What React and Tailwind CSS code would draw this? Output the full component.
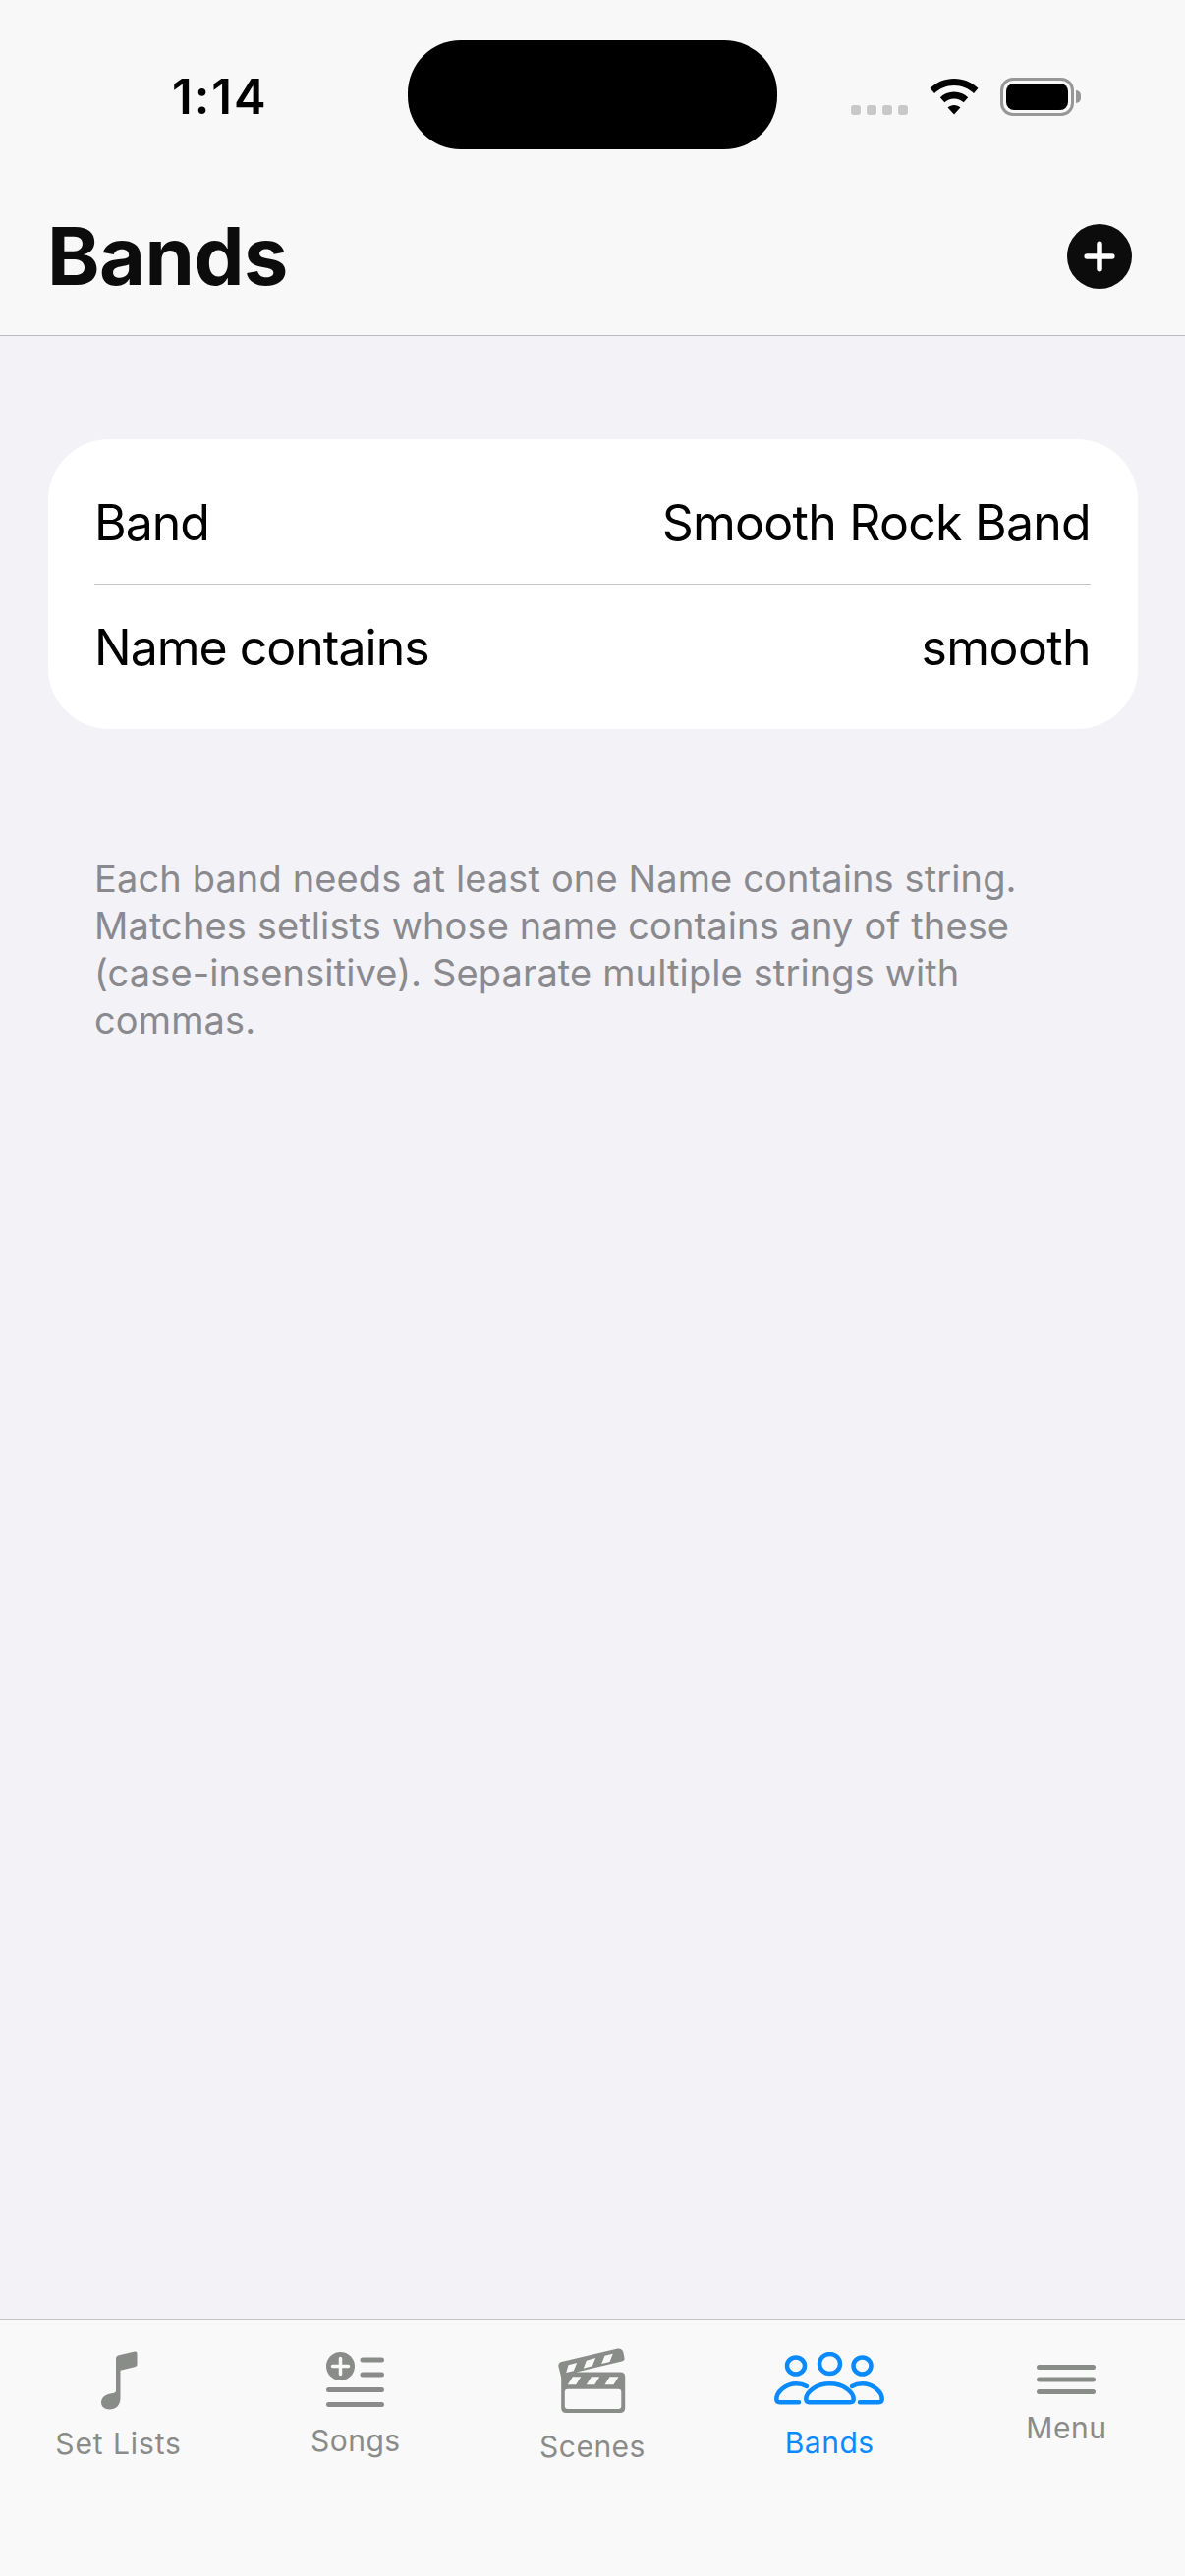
import { Plus } from 'lucide-react'

const sf = 'font-["Inter",sans-serif]'

function Wifi() {
  return (
    <svg width="50" height="37" viewBox="0 0 50 37" className="text-black">
      <path d="M25 0C34.5 0 43 3.7 49.5 9.8L45 15C39.8 10 32.8 7 25 7S10.2 10 5 15L.5 9.8C7 3.7 15.5 0 25 0Z" fill="currentColor" />
      <path d="M25 13.5C30.5 13.500 35.5 15.700 39.200 19.200L34.700 24.300C32.100 21.900 28.700 20.400 25 20.400S17.900 21.900 15.300 24.300L10.800 19.200C14.500 15.700 19.500 13.500 25 13.500Z" fill="currentColor" />
      <path d="M25 27C27.500 27 29.700 27.900 31.400 29.400L25 36.500L18.600 29.400C20.300 27.900 22.500 27 25 27Z" fill="currentColor" />
    </svg>
  )
}

function Battery() {
  return (
    <div className="flex items-center">
      <div className="w-[75px] h-[39px] rounded-[13px] border-[3px] border-[#979797] p-[3px]">
        <div className="w-full h-full rounded-[8px] bg-black" />
      </div>
      <div className="w-[5px] h-[13px] ml-[2px] rounded-r-full bg-[#979797]" />
    </div>
  )
}

function NoteIcon() {
  return (
    <svg width="37" height="60" viewBox="-1 0 37 60" className="text-[#8a8c8a] overflow-visible">
      <path d="M15 8C15 6 16 4.800 18 4.300L34 .5C35.500 .2 36.500 1 36.500 2.500V13.500C36.500 15 35.800 15.800 34 16.300L19.500 19.700V48C19.500 55 15 59.500 8.500 59.500C3.500 59.500 0 56.500 0 52.500C0 47.500 4 44.500 9 43.500L13 42.700C14.500 42.300 15 41.500 15 40Z" fill="currentColor" />
    </svg>
  )
}

function SongsIcon() {
  return (
    <svg width="59" height="56" viewBox="0 0 59 56" className="text-[#8a8c8a]">
      <circle cx="14.500" cy="14.500" r="14.500" fill="currentColor" />
      <path d="M14.500 6.500V22.500M6.500 14.500H22.500" stroke="#f9f9f9" strokeWidth="3.500" strokeLinecap="round" />
      <path d="M37 8H56.500M37 23H56.500M2.500 38.500H56.500M2.500 53.500H56.500" stroke="currentColor" strokeWidth="5" strokeLinecap="round" />
    </svg>
  )
}

function ScenesIcon() {
  return (
    <svg width="70" height="67" viewBox="1.500 0 70 67" className="text-[#8a8c8a]">
      <path d="M2 19C1.300 16.500 2.500 14.800 5 14L61 .8C64.500 0 67 1.200 67.800 4L69 10C69.300 12 68.500 13 66.500 13.500L20 24.500H65C68 24.500 69.700 26.200 69.700 29V61C69.700 64.300 67.800 66 64.700 66H9.700C6.500 66 4.700 64.300 4.700 61V30Z" fill="currentColor" />
      <path d="M12 17.300L20.700 15L17.300 23.300L9.700 25ZM30.300 12.700L39.700 10L36.300 18.300L27.300 20.700ZM49 7.700L57.300 5.700L54 14L45.700 16Z" fill="#f9f9f9" />
      <path d="M16.300 29.300H24.700L19.700 37.300H11.300ZM35.300 29.300H43.700L38.700 37.300H30.300ZM54 29.300H63L58 37.300H49Z" fill="#f9f9f9" />
      <rect x="8.300" y="41.700" width="57.500" height="20.300" rx="3" fill="#f9f9f9" />
    </svg>
  )
}

function BandsIcon() {
  return (
    <svg width="112" height="54" viewBox="0 0 112 54" fill="none" stroke="#0a8aff" strokeWidth="4.500" strokeLinecap="round" className="shrink-0">
      <ellipse cx="22" cy="14" rx="9" ry="8.500" />
      <ellipse cx="56.500" cy="12" rx="10.500" ry="10" />
      <ellipse cx="89.500" cy="14" rx="9" ry="8.500" />
      <path d="M33 35C29.500 33 26 32.300 22.500 32.300C11 32.300 2.300 41 2.300 48C2.300 50 3.500 51.200 5.500 51.200H25" />
      <path d="M79 35C82.500 33 86 32.300 89.500 32.300C101 32.300 109.700 41 109.700 48C109.700 50 108.500 51.200 106.500 51.200H87" />
      <path d="M56.500 32.300C43 32.300 32.300 40.500 32.300 48C32.300 50 33.500 51.200 35.500 51.200H77.500C79.500 51.200 80.700 50 80.700 48C80.700 40.500 70 32.300 56.500 32.300Z" />
    </svg>
  )
}

function MenuIcon() {
  return (
    <svg width="60" height="30" viewBox="0 0 60 30" className="text-[#8a8c8a]">
      <path d="M2.500 2.500H57.500M2.500 15H57.500M2.500 27.500H57.500" stroke="currentColor" strokeWidth="5" strokeLinecap="round" />
    </svg>
  )
}

const tabs = [
  { label: 'Set Lists', Icon: NoteIcon, top: 'pt-[32px]', gap: 'gap-[16px]', color: 'text-[#8a8c8a]', track: 'tracking-[0.9px]' },
  { label: 'Songs', Icon: SongsIcon, top: 'pt-[33px]', gap: 'gap-[16px]', color: 'text-[#8a8c8a]', track: 'tracking-[0.5px]' },
  { label: 'Scenes', Icon: ScenesIcon, top: 'pt-[29px]', gap: 'gap-[15px]', color: 'text-[#8a8c8a]', track: 'tracking-[0.5px]' },
  { label: 'Bands', Icon: BandsIcon, top: 'pt-[33px]', gap: 'gap-[20px]', color: 'text-[#0a8aff]', track: 'tracking-[0.5px]' },
  { label: 'Menu', Icon: MenuIcon, top: 'pt-[46px]', gap: 'gap-[16px]', color: 'text-[#8a8c8a]', track: 'tracking-[0.5px]' },
]

export default function App() {
  return (
    <div className={`relative flex flex-col h-screen bg-[#f2f2f7] ${sf}`}>

      {/* dynamic island */}
      <div className="absolute left-[415px] top-[41px] w-[376px] h-[111px] rounded-[54px] bg-black" />

      {/* ── Header ── */}
      <header className="h-[342px] flex flex-col bg-[#f8f8f8] border-b border-[#bcbcc0]">
        <div className="flex items-center justify-between h-[196px] pl-[175px] pr-[106px]">
          <span className="text-[49px] leading-none font-semibold text-black tracking-[2px]">1:14</span>
          <div className="flex items-center gap-[22px]">
            <div className="flex items-center gap-[6px] mt-[27px]">
              <span className="w-[10px] h-[10px] rounded-[3px] bg-[#c8c8c8]" />
              <span className="w-[10px] h-[10px] rounded-[3px] bg-[#c8c8c8]" />
              <span className="w-[10px] h-[10px] rounded-[3px] bg-[#c8c8c8]" />
              <span className="w-[10px] h-[10px] rounded-[3px] bg-[#c8c8c8]" />
            </div>
            <Wifi />
            <Battery />
          </div>
        </div>
      </header>

      {/* ── Title row ── */}
      <div className="absolute left-[48px] right-[54px] top-[228px] h-[66px] flex items-center justify-between">
        <h1 className="text-[81px] leading-none font-bold text-[#0c0c0c] tracking-[-0.5px]">Bands</h1>
        <button className="w-[66px] h-[66px] rounded-full bg-[#0c0c0c] flex items-center justify-center">
          <Plus className="w-[44px] h-[44px] text-white" strokeWidth={3} />
        </button>
      </div>

      {/* ── Content ── */}
      <main className="flex-1 px-[49px] pt-[105px]">
        <div className="w-[1109px] bg-white rounded-[62px] pl-[47px] pr-[48px] pt-[23px] pb-[19px]">
          <div className="h-[125px] flex items-center justify-between border-b border-[#c6c6c8] text-[50px] text-black">
            <span className="tracking-[-1px]">Band</span>
            <span className="tracking-[-0.75px]">Smooth Rock Band</span>
          </div>
          <div className="h-[128px] flex items-center justify-between text-[50px] text-black">
            <span className="tracking-[-1px]">Name contains</span>
            <span className="tracking-[-0.6px]">smooth</span>
          </div>
        </div>
        <p className="mt-[128px] px-[47px] text-[38px] leading-[48px] text-[#8a8a8e] tracking-[0.12px]">
          Each band needs at least one Name contains string. Matches setlists whose name contains any of these (case-insensitive). Separate multiple strings with commas.
        </p>
      </main>

      {/* ── Tab bar ── */}
      <nav className="h-[262px] grid grid-cols-5 bg-[#f9f9f9] border-t border-[#c4c4c8]">
        {tabs.map(({ label, Icon, top, gap, color, track }) => (
          <div key={label} className={`flex flex-col items-center ${top} ${gap}`}>
            <Icon />
            <span className={`text-[30px] leading-[36px] ${track} ${color}`}>{label}</span>
          </div>
        ))}
      </nav>
    </div>
  )
}
